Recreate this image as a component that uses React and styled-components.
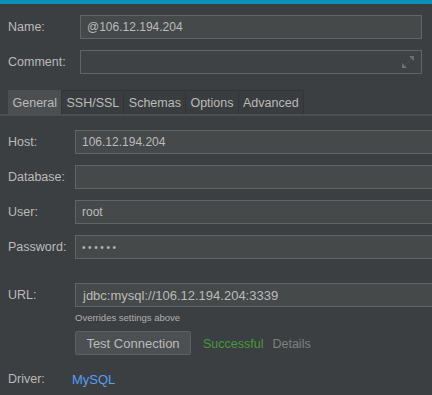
import React from 'react';
import styled, { createGlobalStyle } from 'styled-components';

const GlobalStyle = createGlobalStyle`
   html, body {
      margin: 0;
      padding: 0;
      background: #3c3f41;
      overflow: hidden;
   }
   body {
      font-family: 'Liberation Sans', Arial, sans-serif;
      color: #bbbbbb;
   }
`;

const Page = styled.div`
   width: 432px;
   height: 395px;
   background: #3c3f41;
   overflow: hidden;
`;

const TopBar = styled.div`
   height: 4px;
   background: #0d90b6;
`;

const Header = styled.div`
   display: grid;
   grid-template-columns: 72px 1fr;
   grid-auto-rows: 24px;
   row-gap: 11px;
   padding: 11px 10px 0 8px;
   align-items: center;
`;

const Label = styled.label`
   font-size: 12.5px;
   color: #bbbbbb;
   white-space: nowrap;
`;

const Field = styled.div`
   position: relative;
   box-sizing: border-box;
   height: 24px;
   display: flex;
   align-items: center;
   padding-left: ${({ $pad }) => $pad || 6}px;
   background: ${({ $dim }) => ($dim ? '#3f4244' : '#45494a')};
   border: 1px solid #646464;
   font-size: ${({ $size }) => $size || 12}px;
   color: #bbbbbb;
   white-space: nowrap;
`;

const ExpandIcon = styled.svg`
   position: absolute;
   right: 6px;
   top: 4px;
`;

const TabStrip = styled.div`
   display: flex;
   margin-top: 16px;
   padding-left: 8px;
   border-bottom: 2px solid #4b4f51;
`;

const Tab = styled.div`
   box-sizing: border-box;
   height: 24px;
   display: flex;
   align-items: center;
   padding: 0 4px 0 4.5px;
   font-size: 12.5px;
   color: #bbbbbb;
   background: ${({ $active }) => ($active ? '#4b4f51' : '#3a3d3f')};
   border-right: 1px solid #323436;
   border-top: 1px solid ${({ $active }) => ($active ? '#4b4f51' : '#323436')};
`;

const Form = styled.div`
   display: grid;
   grid-template-columns: 67px 460px;
   grid-auto-rows: 24px;
   row-gap: 11px;
   padding: 14px 0 0 8px;
   align-items: center;
`;

const Dots = styled.span`
   font-size: 10px;
   letter-spacing: 2.6px;
   color: #b5b5b5;
`;

const UrlBlock = styled.div`
   display: grid;
   grid-template-columns: 67px 460px;
   padding: 24px 0 0 8px;
   align-items: center;
`;

const Hint = styled.div`
   grid-column: 2;
   margin-top: 5px;
   font-size: 9.5px;
   line-height: 11px;
   color: #b0b0b0;
`;

const Actions = styled.div`
   grid-column: 2;
   display: flex;
   align-items: center;
   gap: 12px;
   margin-top: 8px;
`;

const Button = styled.button`
   box-sizing: border-box;
   width: 116px;
   height: 24px;
   padding: 0;
   background: #4c5052;
   border: 1px solid #5e6060;
   border-radius: 2px;
   font-family: 'Liberation Sans', Arial, sans-serif;
   font-size: 13px;
   color: #bbbbbb;
`;

const Status = styled.span`
   font-size: 12.5px;
   color: ${({ $color }) => $color};
   margin-left: ${({ $gap }) => $gap || 0}px;
`;

const DriverRow = styled.div`
   display: flex;
   align-items: center;
   height: 16px;
   margin-top: 16px;
   padding-left: 8px;
`;

const DriverLabel = styled(Label)`
   width: 64px;
`;

const Link = styled.a`
   font-size: 13px;
   color: #589df6;
   text-decoration: none;
`;

const tabs = ['General', 'SSH/SSL', 'Schemas', 'Options', 'Advanced'];

export default function App() {
   return (
      <Page>
         <GlobalStyle />
         <TopBar />
         <Header>
            <Label>Name:</Label>
            <Field>@106.12.194.204</Field>
            <Label>Comment:</Label>
            <Field $dim>
               <ExpandIcon width='14' height='14' viewBox='0 0 14 14'>
                  <path d='M13 1 L13 6 L8 1 Z' fill='#6f7173' />
                  <path d='M1 13 L1 8 L6 13 Z' fill='#6f7173' />
                  <path d='M10 4 L4 10' stroke='#5d5f61' strokeWidth='1' strokeDasharray='1.5 1.5' />
               </ExpandIcon>
            </Field>
         </Header>

         <TabStrip>
            {tabs.map((t, i) => (
               <Tab key={t} $active={i === 0}>
                  {t}
               </Tab>
            ))}
         </TabStrip>

         <Form>
            <Label>Host:</Label>
            <Field>106.12.194.204</Field>
            <Label>Database:</Label>
            <Field />
            <Label>User:</Label>
            <Field>root</Field>
            <Label>Password:</Label>
            <Field>
               <Dots>••••••</Dots>
            </Field>
         </Form>

         <UrlBlock>
            <Label>URL:</Label>
            <Field $size={13} $pad={7}>
               jdbc:mysql://106.12.194.204:3339
            </Field>
            <Hint>Overrides settings above</Hint>
            <Actions>
               <Button>Test Connection</Button>
               <span>
                  <Status $color='#469a3a'>Successful</Status>
                  <Status $color='#808080' $gap={9}>
                     Details
                  </Status>
               </span>
            </Actions>
         </UrlBlock>

         <DriverRow>
            <DriverLabel>Driver:</DriverLabel>
            <Link>MySQL</Link>
         </DriverRow>
      </Page>
   );
}
